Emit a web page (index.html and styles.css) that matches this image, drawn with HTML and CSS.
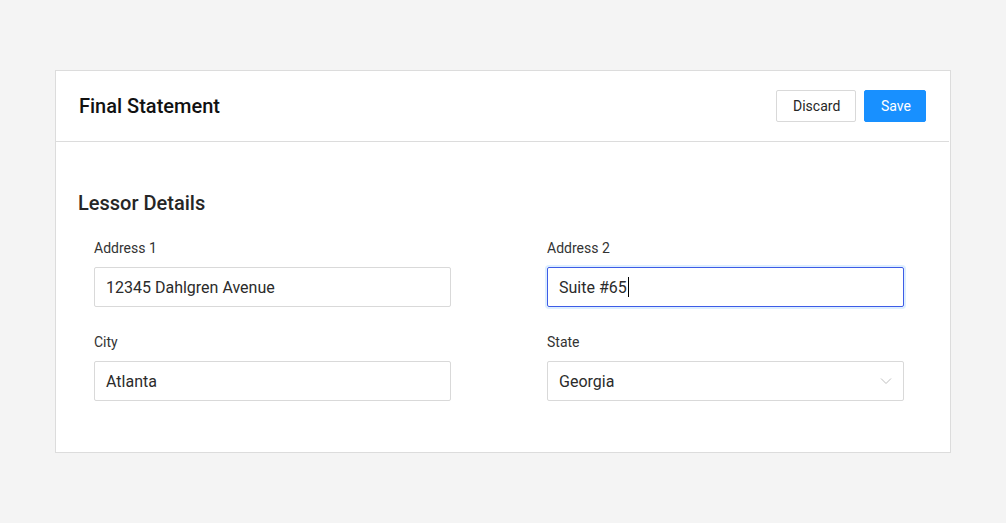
FILE: index.html
```html
<!DOCTYPE html>
<html>
<head>
<meta charset="utf-8">
<link rel="stylesheet" href="styles.css">
</head>
<body>
<div class="card">
  <div class="card-header">
    <h1 class="title">Final Statement</h1>
    <div class="actions">
      <button class="btn btn-default">Discard</button>
      <button class="btn btn-primary">Save</button>
    </div>
  </div>
  <div class="card-body">
    <h2 class="section-title">Lessor Details</h2>
    <div class="form-grid">
      <div class="field">
        <label class="label">Address 1</label>
        <div class="input">12345 Dahlgren Avenue</div>
      </div>
      <div class="field">
        <label class="label">Address 2</label>
        <div class="input focused">Suite #65<span class="caret"></span></div>
      </div>
      <div class="field">
        <label class="label">City</label>
        <div class="input">Atlanta</div>
      </div>
      <div class="field">
        <label class="label">State</label>
        <div class="input select">
          <span>Georgia</span>
          <svg class="chev" width="12" height="8" viewBox="0 0 12 8"><path d="M1 1.5 L6 6.5 L11 1.5" fill="none" stroke="#bfbfbf" stroke-width="1"/></svg>
        </div>
      </div>
    </div>
  </div>
</div>
</body>
</html>
```

FILE: styles.css
```css
* { box-sizing: border-box; }
html, body { margin: 0; padding: 0; }
body {
  background: #f4f4f4;
  font-family: Roboto, "Liberation Sans", Arial, sans-serif;
  color: #262626;
  padding: 70px 56px 0 55px;
  height: 523px;
}
.card {
  width: 896px;
  background: #fff;
  border: 1px solid #dcdcdc;
}
.card-header {
  height: 71px;
  display: flex;
  align-items: center;
  justify-content: space-between;
  padding: 0 23px 0 23px;
  border-bottom: 1px solid #dcdcdc;
  margin-right: 1px;
}
.title {
  margin: 0;
  font-size: 20px;
  font-weight: 500;
  color: #111;
}
.actions { display: flex; gap: 8px; }
.btn {
  height: 32px;
  font-family: Roboto, "Liberation Sans", Arial, sans-serif;
  font-size: 14px;
  border-radius: 2px;
  padding: 0 16px;
  cursor: pointer;
}
.btn-default {
  width: 80px;
  background: #fff;
  border: 1px solid #d9d9d9;
  color: #262626;
}
.btn-primary {
  width: 62px;
  background: #1890ff;
  border: 1px solid #1890ff;
  color: #fff;
}
.card-body {
  padding: 49px 0 51px 22px;
}
.section-title {
  margin: 0;
  font-size: 20px;
  font-weight: 500;
  color: #262626;
  line-height: 24px;
}
.form-grid {
  display: grid;
  grid-template-columns: 357px 357px;
  column-gap: 96px;
  row-gap: 26px;
  padding-left: 16px;
  margin-top: 24px;
}
.field { display: flex; flex-direction: column; }
.label {
  font-size: 14px;
  color: #333;
  line-height: 18px;
  margin-bottom: 10px;
}
.input {
  height: 40px;
  border: 1px solid #d9d9d9;
  border-radius: 2px;
  padding: 0 11px;
  display: flex;
  align-items: center;
  font-size: 16px;
  color: #2b2b2b;
}
.input.focused {
  border-color: #3d5ce6;
  box-shadow: 0 0 0 2px rgba(24, 144, 255, 0.15);
}
.caret {
  display: inline-block;
  width: 1px;
  height: 20px;
  background: #000;
  margin-left: 1px;
}
.select { justify-content: space-between; padding-right: 11px; }
.chev { display: block; }
```
